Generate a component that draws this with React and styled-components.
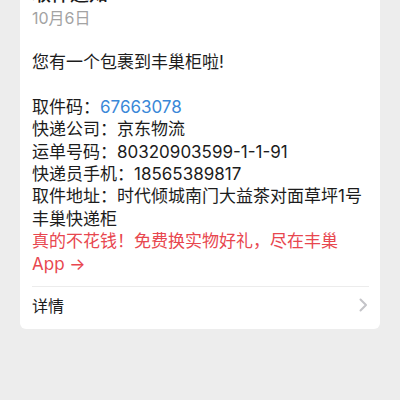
import React from "react";
import styled, { createGlobalStyle } from "styled-components";

const GlobalStyle = createGlobalStyle`
  html, body {
    margin: 0;
    padding: 0;
    background: #ededed;
    overflow: hidden;
  }
  body {
    font-family: Inter, "Noto Sans CJK SC", sans-serif;
    -webkit-font-smoothing: antialiased;
  }
`;

const Page = styled.div`
  width: 400px;
  height: 400px;
  padding: 0 20px;
  box-sizing: border-box;
`;

const Card = styled.div`
  margin-top: -30px;
  background: #fff;
  border-radius: 6px;
  padding: 13px 11px 7px 12px;
`;

const Title = styled.div`
  font-size: 19px;
  line-height: 24px;
  font-weight: 500;
  color: #1a1a1a;
`;

const DateText = styled.div`
  font-size: 16px;
  line-height: 22px;
  color: #a3a3a3;
`;

const Body = styled.div`
  margin-top: 22px;
  font-size: 17px;
  line-height: 22.4px;
  color: #1c1c1c;
  white-space: nowrap;
`;

const Line = styled.div`
  min-height: 22.4px;
  color: ${(p) => (p.$promo ? "#e8474f" : "inherit")};
`;

const Code = styled.span`
  color: #3a88d8;
`;

const Divider = styled.div`
  margin-top: 11px;
  height: 1px;
  background: #ececec;
`;

const DetailRow = styled.div`
  height: 35px;
  display: flex;
  align-items: center;
  justify-content: space-between;
  font-size: 16px;
  color: #1c1c1c;
`;

const Chevron = () => (
  <svg width="9" height="14" viewBox="0 0 9 14" style={{ marginRight: 1 }}>
    <path d="M1.5 1.5 L7 7 L1.5 12.5" fill="none" stroke="#c4c4c8" strokeWidth="2" strokeLinecap="round" strokeLinejoin="round" />
  </svg>
);

export default function App() {
  return (
    <>
      <GlobalStyle />
      <Page>
        <Card>
          <Title>取件通知</Title>
          <DateText>10月6日</DateText>
          <Body>
            <Line>您有一个包裹到丰巢柜啦!</Line>
            <Line />
            <Line>
              取件码：<Code>67663078</Code>
            </Line>
            <Line>快递公司：京东物流</Line>
            <Line>运单号码：80320903599-1-1-91</Line>
            <Line>快递员手机：18565389817</Line>
            <Line>取件地址：时代倾城南门大益茶对面草坪1号</Line>
            <Line>丰巢快递柜</Line>
            <Line $promo>真的不花钱！免费换实物好礼，尽在丰巢</Line>
            <Line $promo>App →</Line>
          </Body>
          <Divider />
          <DetailRow>
            <span>详情</span>
            <Chevron />
          </DetailRow>
        </Card>
      </Page>
    </>
  );
}
